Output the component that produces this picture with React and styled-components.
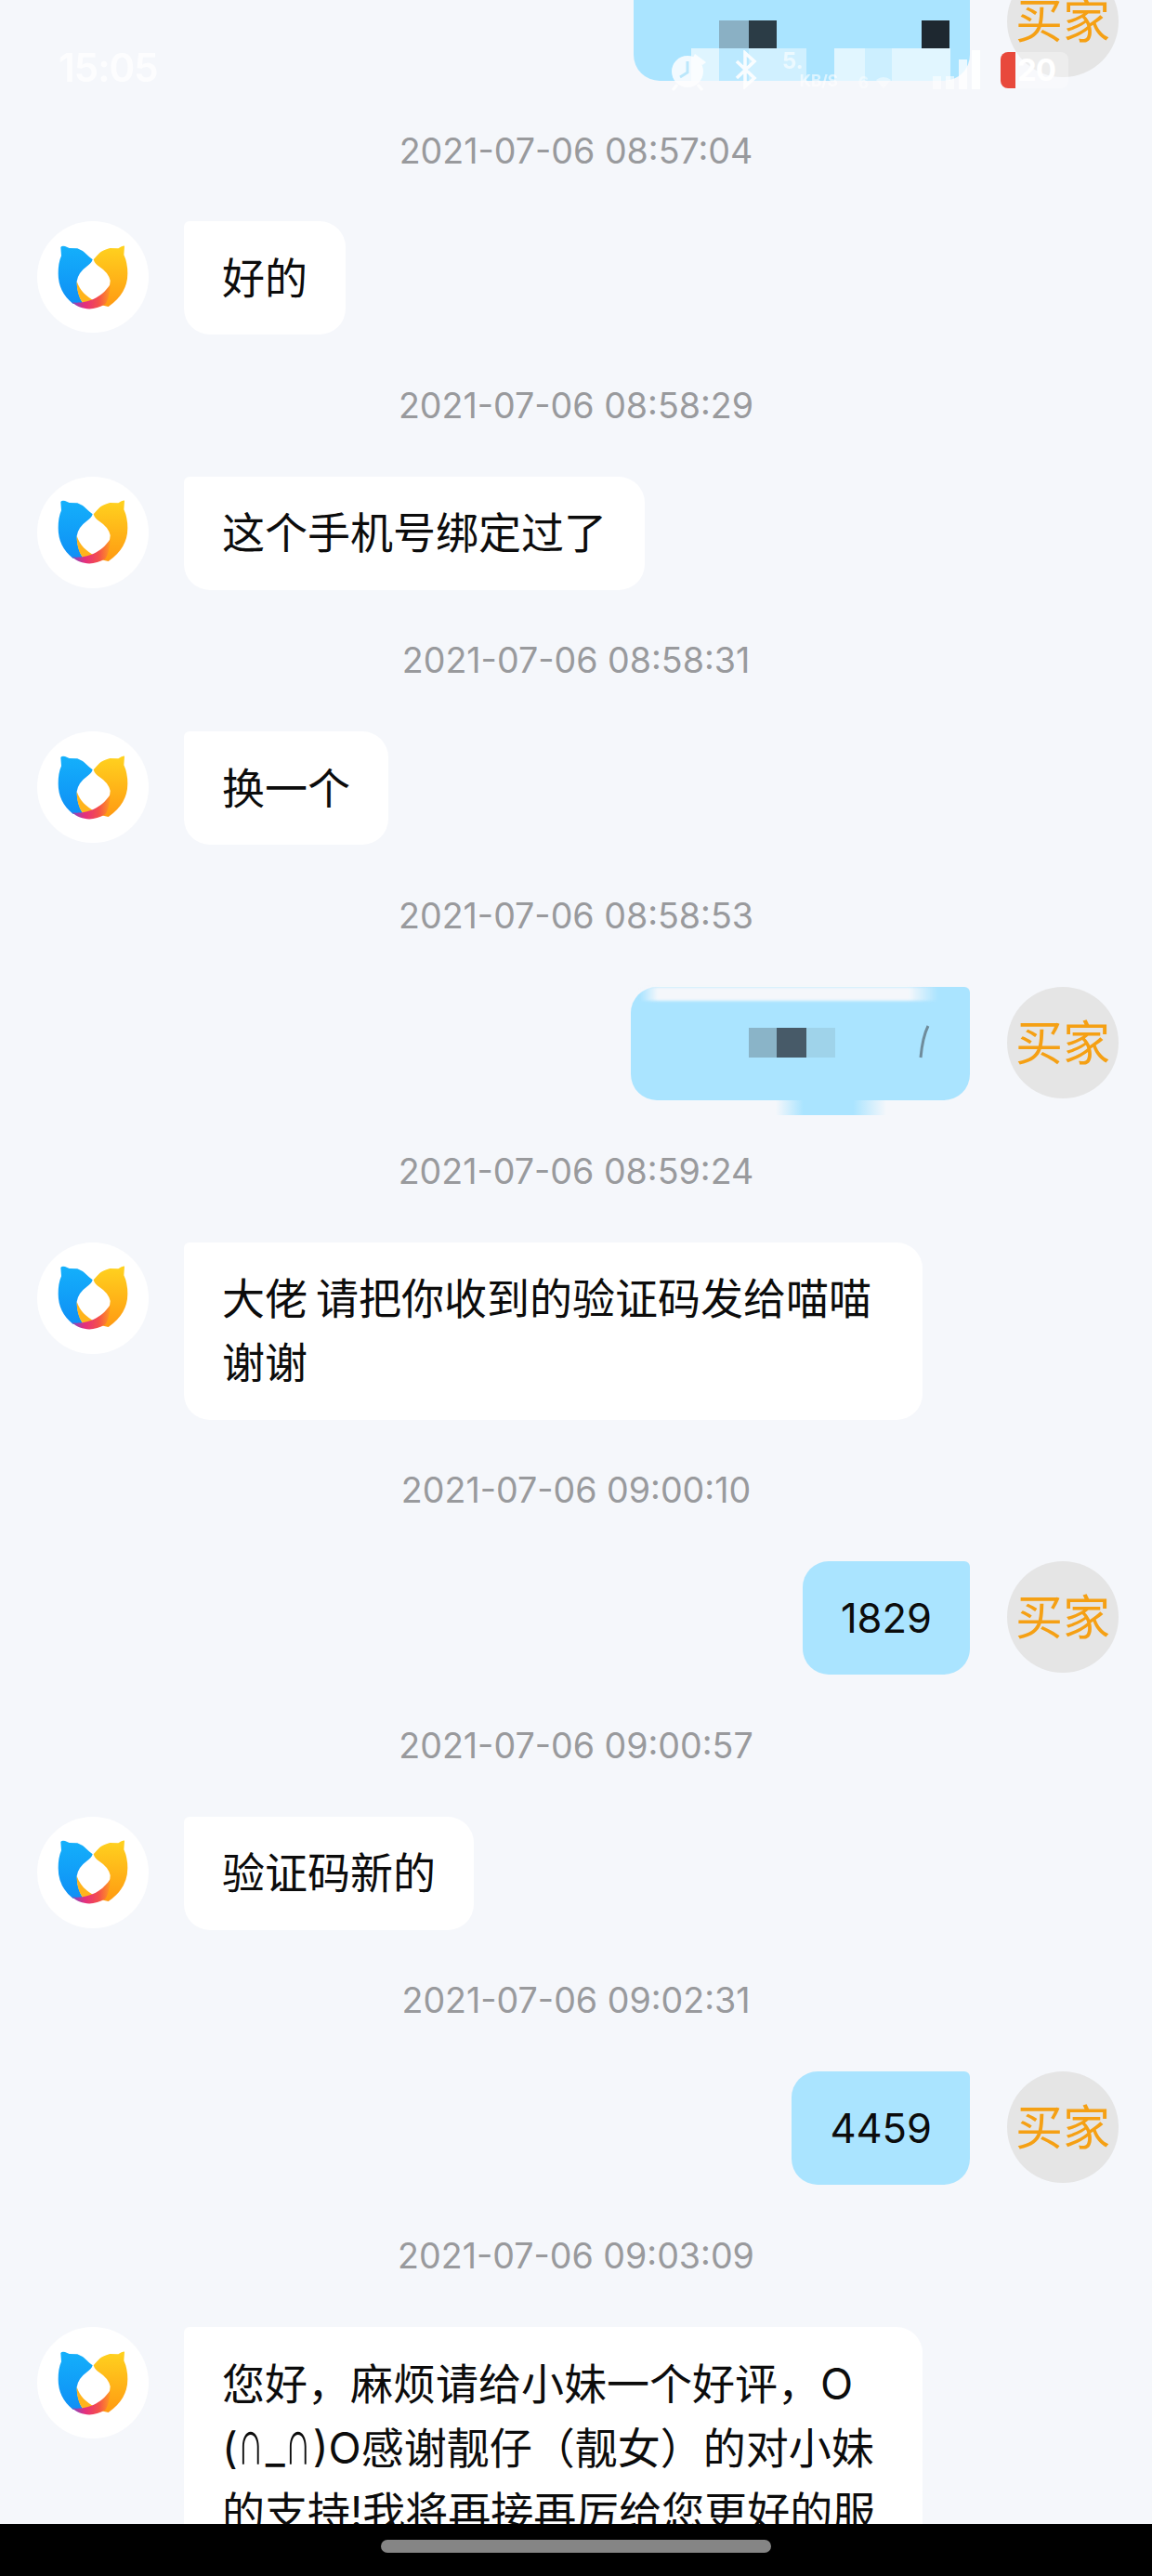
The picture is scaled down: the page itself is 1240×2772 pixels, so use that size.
import styled, { createGlobalStyle } from "styled-components";

const GlobalStyle = createGlobalStyle`
    html, body {
        margin: 0;
        padding: 0;
        background: #f5f7fb;
    }
    * {
        box-sizing: border-box;
    }
`;

const Page = styled.div`
    position: relative;
    display: flex;
    flex-direction: column;
    width: 1240px;
    height: 2772px;
    overflow: hidden;
    background: #f5f7fb;
    font-family: "Inter", "Noto Sans CJK SC", sans-serif;
`;

const ChatList = styled.div`
    flex: 1;
    min-height: 0;
    overflow: hidden;
    padding: 0 36px 0 40px;
    display: flex;
    flex-direction: column;
`;

// the list is scrolled, the first bubble is cut by the top of the screen
const ChatInner = styled.div`
    margin-top: -37.5px;
    display: flex;
    flex-direction: column;
    flex-shrink: 0;
`;

const Time = styled.div`
    height: ${props => props.$h || 152.6}px;
    margin-right: -36px;
    margin-left: -40px;
    display: flex;
    align-items: center;
    justify-content: center;
    color: #999a9d;
    font-size: 37.6px;
    line-height: 1;
`;

const Row = styled.div`
    display: flex;
    align-items: flex-start;
    justify-content: ${props => props.$mine ? "flex-end" : "flex-start"};
    gap: ${props => props.$mine ? "40px" : "38px"};
    flex-shrink: 0;
`;

const Avatar = styled.div`
    width: 120px;
    height: 120px;
    border-radius: 50%;
    flex-shrink: 0;
    display: flex;
    align-items: center;
    justify-content: center;
    background: ${props => props.$mine ? "#e5e5e5" : "#ffffff"};
    color: #f5a014;
    font-size: 51px;
    line-height: 1;
    white-space: nowrap;
`;

const Bubble = styled.div`
    position: relative;
    min-height: ${props => props.$height || "122px"};
    width: ${props => props.$width || "auto"};
    max-width: 795px;
    padding: 26.5px 41px;
    color: #0c0c0c;
    font-size: ${props => props.$digits ? "43.5px" : "46px"};
    line-height: 69px;
    word-spacing: -4px;
    background: ${props => props.$mine ? "#aae4ff" : "#ffffff"};
    border-radius: ${props => props.$mine ? "28px 6px 28px 28px" : "6px 28px 28px 28px"};
`;

// the arches of the emoticon are tall but much narrower than the font draws them
const Arch = styled.span`
    display: inline-block;
    width: 30px;
    transform: scaleX(0.6);
    transform-origin: left center;
`;

const Tile = styled.div`
    position: absolute;
    left: ${props => props.$left}px;
    top: ${props => props.$top}px;
    width: ${props => props.$w}px;
    height: ${props => props.$h}px;
    background: ${props => props.$color};
`;

const Patch = styled.div`
    position: absolute;
    left: ${props => props.$left}px;
    bottom: 0;
    width: ${props => props.$w}px;
    height: 35px;
    background: ${props => props.$color};
`;

const TopSmear = styled.div`
    position: absolute;
    left: 10px;
    right: 34px;
    top: 0;
    height: 15px;
    background: linear-gradient(90deg, rgba(245,247,251,0) 0%, #f5f7fb 6%, #f5f7fb 90%, rgba(245,247,251,0) 100%);
    filter: blur(1.5px);
`;

const BottomSmear = styled.div`
    position: absolute;
    left: 156px;
    top: 100%;
    width: 119px;
    height: 16px;
    background: linear-gradient(90deg, rgba(170,228,255,0) 0%, #aae4ff 25%, #aae4ff 70%, rgba(170,228,255,0) 100%);
`;

const Slash = styled.svg`
    position: absolute;
    left: 306px;
    top: 40px;
`;

const Mark = styled.svg`
    position: absolute;
    left: 296px;
    top: 6px;
`;

const StatusBar = styled.div`
    position: absolute;
    top: 0;
    left: 0;
    right: 0;
    height: 100px;
    padding: 51px 0 0 63px;
    display: flex;
    justify-content: space-between;
    align-items: flex-start;
    color: #ffffff;
`;

const Clock = styled.div`
    font-size: 42px;
    font-weight: 600;
    line-height: 44px;
    letter-spacing: -1px;
    opacity: 0.85;
`;

const StatusIcons = styled.div`
    display: flex;
    align-items: flex-start;
    margin-top: 3px;
    padding-right: 90px;
`;

const AlarmIcon = styled.svg`
    margin: 4px 28px 0 0;
    opacity: 0.85;
`;

const BluetoothIcon = styled.svg`
    margin-right: 26px;
    opacity: 0.9;
`;

const Speed = styled.div`
    display: flex;
    flex-direction: column;
    align-items: flex-end;
    width: 60px;
    margin-right: 22px;
    font-weight: 700;
    opacity: 0.6;
`;

const SpeedValue = styled.span`
    align-self: flex-start;
    font-size: 24px;
    line-height: 24px;
`;

const SpeedUnit = styled.span`
    font-size: 17px;
    line-height: 18px;
`;

const Net = styled.div`
    display: flex;
    align-items: center;
    gap: 8px;
    width: 80px;
    margin-top: 27px;
    font-size: 17px;
    font-weight: 700;
    line-height: 16px;
    opacity: 0.45;
`;

const Signal = styled.div`
    display: flex;
    align-items: flex-end;
    gap: 5px;
    height: 42px;
    width: 54px;
    margin-right: 19px;
`;

const SignalBar = styled.div`
    width: 9px;
    height: ${props => props.$h}px;
    background: #ffffff;
    opacity: ${props => props.$o};
`;

const Battery = styled.div`
    position: relative;
    width: 73px;
    height: 39px;
    margin-top: 2px;
    border-radius: 8px;
    overflow: hidden;
    background: rgba(255, 255, 255, 0.3);
    display: flex;
`;

const BatteryLevel = styled.div`
    width: 16px;
    background: #e8493c;
`;

const BatteryText = styled.div`
    padding-left: 2px;
    font-size: 33px;
    font-weight: 700;
    line-height: 38px;
    letter-spacing: -1px;
`;

const NavBar = styled.div`
    height: 56px;
    flex-shrink: 0;
    background: #000000;
    display: flex;
    justify-content: center;
    padding-top: 17px;
    z-index: 2;
`;

const NavPill = styled.div`
    width: 420px;
    height: 14px;
    border-radius: 7px;
    background: #858585;
`;

function Logo() {
    return (
        <svg width="100" height="85" viewBox="0 0 300 255">
            <defs>
                <linearGradient id="logoBlue" x1="0" y1="0" x2="0" y2="1">
                    <stop offset="0" stopColor="#14b0fb" />
                    <stop offset="1" stopColor="#0f8ff5" />
                </linearGradient>
                <linearGradient id="logoYellow" x1="0" y1="0" x2="0" y2="1">
                    <stop offset="0" stopColor="#ffd21f" />
                    <stop offset="1" stopColor="#ff9a12" />
                </linearGradient>
                <linearGradient id="logoRibbon" x1="0" y1="0" x2="1" y2="0">
                    <stop offset="0" stopColor="#7a4bc4" />
                    <stop offset="0.35" stopColor="#e62f7c" />
                    <stop offset="0.7" stopColor="#f4504a" />
                    <stop offset="1" stopColor="#ff9a20" />
                </linearGradient>
            </defs>
            <path fill="url(#logoBlue)" d="M46 30 Q50 24 60 27 L74 33 L100 34 Q120 42 128 52 Q138 62 149 70 Q146 82 130 92 Q102 112 98 140 Q98 180 118 212 L85 212 Q38 175 38 115 Q38 80 48 58 Z" />
            <path fill="url(#logoYellow)" d="M252 26 Q246 24 232 34 L205 33 Q180 40 172 48 Q162 58 152 70 Q156 84 172 94 Q200 112 206 138 Q205 180 170 215 L200 222 Q262 180 262 115 Q262 80 250 55 Z" />
            <path fill="#ffb41c" d="M98 140 C98 170 105 195 118 210 L155 203 C130 190 108 170 98 140 Z" />
            <path fill="url(#logoRibbon)" d="M82 208 C115 212 170 205 206 150 C205 175 200 200 190 214 C150 238 110 232 82 208 Z" />
        </svg>
    );
}

function Buyer() {
    return <Avatar $mine>买家</Avatar>;
}

function Service() {
    return <Avatar><Logo /></Avatar>;
}

function Status() {
    return (
        <StatusBar>
            <Clock>15:05</Clock>
            <StatusIcons>
                <AlarmIcon width="42" height="40" viewBox="0 0 42 40">
                    <circle cx="20" cy="19" r="17" fill="#ffffff" />
                    <path d="M28 0 L40 9 L36 12 L26 4 Z" fill="#ffffff" />
                    <path d="M9 33 L4 39 M31 33 L36 39" stroke="#ffffff" strokeWidth="3" />
                    <path d="M20 8 L20 20 L12 25" fill="none" stroke="#bfe8fb" strokeWidth="3" />
                </AlarmIcon>
                <BluetoothIcon width="26" height="42" viewBox="0 0 26 42">
                    <path d="M3 12 L22 30 L12 39 L12 3 L22 12 L3 30" fill="none" stroke="#ffffff" strokeWidth="3.5" />
                </BluetoothIcon>
                <Speed>
                    <SpeedValue>5.</SpeedValue>
                    <SpeedUnit>KB/S</SpeedUnit>
                </Speed>
                <Net>
                    <span>6</span>
                    <svg width="16" height="12" viewBox="0 0 16 12">
                        <path d="M0 3 Q8 -3 16 3 L8 12 Z" fill="#ffffff" />
                    </svg>
                </Net>
                <Signal>
                    <SignalBar $h={14} $o={0.55} />
                    <SignalBar $h={14} $o={0.6} />
                    <SignalBar $h={32} $o={0.75} />
                    <SignalBar $h={42} $o={0.9} />
                </Signal>
                <Battery>
                    <BatteryLevel />
                    <BatteryText>20</BatteryText>
                </Battery>
            </StatusIcons>
        </StatusBar>
    );
}

export default function App() {
    return (
        <Page>
            <GlobalStyle />
            <ChatList>
                <ChatInner>
                    <Row $mine>
                        <Bubble $mine $width="362px" $height="124.5px">
                            <Mark width="24" height="10" viewBox="0 0 24 10">
                                <path d="M0 1 H22 L20 8 Q18 3 8 2 Z" fill="#5d7685" />
                            </Mark>
                            <Tile $left={92} $top={59.5} $w={32} $h={30} $color="#8ab0c4" />
                            <Tile $left={124} $top={59.5} $w={30} $h={30} $color="#2b3c46" />
                            <Tile $left={310} $top={59.5} $w={30} $h={30} $color="#1e2830" />
                            <Patch $left={62} $w={30} $color="rgba(255,255,255,0.62)" />
                            <Patch $left={92} $w={32} $color="rgba(255,255,255,0.2)" />
                            <Patch $left={124} $w={62} $color="rgba(255,255,255,0.45)" />
                            <Patch $left={216} $w={33} $color="rgba(255,255,255,0.65)" />
                            <Patch $left={249} $w={29} $color="rgba(255,255,255,0.4)" />
                            <Patch $left={278} $w={63} $color="rgba(255,255,255,0.65)" />
                        </Bubble>
                        <Buyer />
                    </Row>
                    <Time $h={151.3}>2021-07-06 08:57:04</Time>
                    <Row>
                        <Service />
                        <Bubble>好的</Bubble>
                    </Row>
                    <Time>2021-07-06 08:58:29</Time>
                    <Row>
                        <Service />
                        <Bubble>这个手机号绑定过了</Bubble>
                    </Row>
                    <Time>2021-07-06 08:58:31</Time>
                    <Row>
                        <Service />
                        <Bubble>换一个</Bubble>
                    </Row>
                    <Time>2021-07-06 08:58:53</Time>
                    <Row $mine>
                        <Bubble $mine $width="365px">
                            <TopSmear />
                            <Tile $left={127} $top={44} $w={30} $h={32} $color="#8ab4c8" />
                            <Tile $left={157} $top={44} $w={32} $h={32} $color="#475a68" />
                            <Tile $left={189} $top={44} $w={31} $h={32} $color="#9fd3ea" />
                            <Slash width="20" height="38" viewBox="0 0 20 38">
                                <path d="M14 2 Q8 14 6 36" fill="none" stroke="#6f8c9c" strokeWidth="3" />
                            </Slash>
                            <BottomSmear />
                        </Bubble>
                        <Buyer />
                    </Row>
                    <Time>2021-07-06 08:59:24</Time>
                    <Row>
                        <Service />
                        <Bubble $width="795px">大佬 请把你收到的验证码发给喵喵谢谢</Bubble>
                    </Row>
                    <Time>2021-07-06 09:00:10</Time>
                    <Row $mine>
                        <Bubble $mine $digits>1829</Bubble>
                        <Buyer />
                    </Row>
                    <Time>2021-07-06 09:00:57</Time>
                    <Row>
                        <Service />
                        <Bubble>验证码新的</Bubble>
                    </Row>
                    <Time>2021-07-06 09:02:31</Time>
                    <Row $mine>
                        <Bubble $mine $digits>4459</Bubble>
                        <Buyer />
                    </Row>
                    <Time>2021-07-06 09:03:09</Time>
                    <Row>
                        <Service />
                        <Bubble $width="795px">
                            您好，麻烦请给小妹一个好评，O<br />
                            (<Arch>∩</Arch>_<Arch>∩</Arch>)O感谢靓仔（靓女）的对小妹<br />
                            的支持!我将再接再厉给您更好的服务
                        </Bubble>
                    </Row>
                </ChatInner>
            </ChatList>
            <NavBar>
                <NavPill />
            </NavBar>
            <Status />
        </Page>
    );
}
